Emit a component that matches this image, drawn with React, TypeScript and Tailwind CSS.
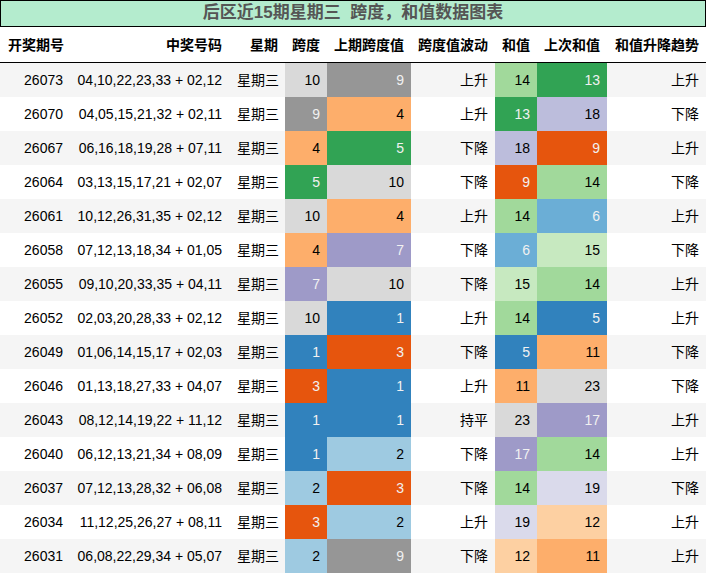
const rows: [string, string, number, number, string, number, number, string][] = [
  ["26073", "04,10,22,23,33 + 02,12", 10, 9, "上升", 14, 13, "上升"],
  ["26070", "04,05,15,21,32 + 02,11", 9, 4, "上升", 13, 18, "下降"],
  ["26067", "06,16,18,19,28 + 07,11", 4, 5, "下降", 18, 9, "上升"],
  ["26064", "03,13,15,17,21 + 02,07", 5, 10, "下降", 9, 14, "下降"],
  ["26061", "10,12,26,31,35 + 02,12", 10, 4, "上升", 14, 6, "上升"],
  ["26058", "07,12,13,18,34 + 01,05", 4, 7, "下降", 6, 15, "下降"],
  ["26055", "09,10,20,33,35 + 04,11", 7, 10, "下降", 15, 14, "上升"],
  ["26052", "02,03,20,28,33 + 02,12", 10, 1, "上升", 14, 5, "上升"],
  ["26049", "01,06,14,15,17 + 02,03", 1, 3, "下降", 5, 11, "下降"],
  ["26046", "01,13,18,27,33 + 04,07", 3, 1, "上升", 11, 23, "下降"],
  ["26043", "08,12,14,19,22 + 11,12", 1, 1, "持平", 23, 17, "上升"],
  ["26040", "06,12,13,21,34 + 08,09", 1, 2, "下降", 17, 14, "上升"],
  ["26037", "07,12,13,28,32 + 06,08", 2, 3, "下降", 14, 19, "下降"],
  ["26034", "11,12,25,26,27 + 08,11", 3, 2, "上升", 19, 12, "上升"],
  ["26031", "06,08,22,29,34 + 05,07", 2, 9, "下降", 12, 11, "上升"],
];

// tab20c-ish colours keyed by value
const spanColor: Record<number, string> = {
  1: "bg-[#3182bd] text-[#f1f1f1]",
  2: "bg-[#9ecae1] text-black",
  3: "bg-[#e6550d] text-[#f1f1f1]",
  4: "bg-[#fdae6b] text-black",
  5: "bg-[#31a354] text-[#f1f1f1]",
  7: "bg-[#9e9ac8] text-[#f1f1f1]",
  9: "bg-[#969696] text-[#f1f1f1]",
  10: "bg-[#d9d9d9] text-black",
};

const sumColor: Record<number, string> = {
  5: "bg-[#3182bd] text-[#f1f1f1]",
  6: "bg-[#6baed6] text-[#f1f1f1]",
  9: "bg-[#e6550d] text-[#f1f1f1]",
  11: "bg-[#fdae6b] text-black",
  12: "bg-[#fdd0a2] text-black",
  13: "bg-[#31a354] text-[#f1f1f1]",
  14: "bg-[#a1d99b] text-black",
  15: "bg-[#c7e9c0] text-black",
  17: "bg-[#9e9ac8] text-[#f1f1f1]",
  18: "bg-[#bcbddc] text-black",
  19: "bg-[#dadaeb] text-black",
  23: "bg-[#d9d9d9] text-black",
};

const headers = ["开奖期号", "中奖号码", "星期", "跨度", "上期跨度值", "跨度值波动", "和值", "上次和值", "和值升降趋势"];

const cols = "grid grid-cols-[70px_159px_56px_42px_84px_84px_42px_70px_99px]";

export default function App() {
  return (
    <div className="w-[706px] bg-white font-['Liberation_Sans','Noto_Sans_CJK_SC',sans-serif] text-sm text-black">
      <div className="flex h-[27px] items-center justify-center border border-black bg-[#b4ecce] text-[17px] font-bold text-[#555555]">
        后区近15期星期三&nbsp;&nbsp;跨度，和值数据图表
      </div>
      <div className={`${cols} h-[36px] border-b border-black font-bold`}>
        {headers.map((h, i) => (
          <div
            key={h}
            className={`flex items-center whitespace-nowrap ${i === 0 ? "justify-start pl-[8px]" : "justify-end pr-[7px]"}`}
          >
            {h}
          </div>
        ))}
      </div>
      {rows.map((r, i) => (
        <div key={r[0]} className={`${cols} h-[34px] ${i % 2 === 0 ? "bg-[#f5f5f5]" : "bg-white"}`}>
          <div className="flex items-center justify-end pr-[7px]">{r[0]}</div>
          <div className="flex items-center justify-end whitespace-nowrap pr-[7px]">{r[1]}</div>
          <div className="flex items-center justify-end pr-[6px]">星期三</div>
          <div className={`flex items-center justify-end pr-[7px] ${spanColor[r[2]]}`}>{r[2]}</div>
          <div className={`flex items-center justify-end pr-[7px] ${spanColor[r[3]]}`}>{r[3]}</div>
          <div className="flex items-center justify-end pr-[7px]">{r[4]}</div>
          <div className={`flex items-center justify-end pr-[7px] ${sumColor[r[5]]}`}>{r[5]}</div>
          <div className={`flex items-center justify-end pr-[7px] ${sumColor[r[6]]}`}>{r[6]}</div>
          <div className="flex items-center justify-end pr-[7px]">{r[7]}</div>
        </div>
      ))}
    </div>
  );
}
